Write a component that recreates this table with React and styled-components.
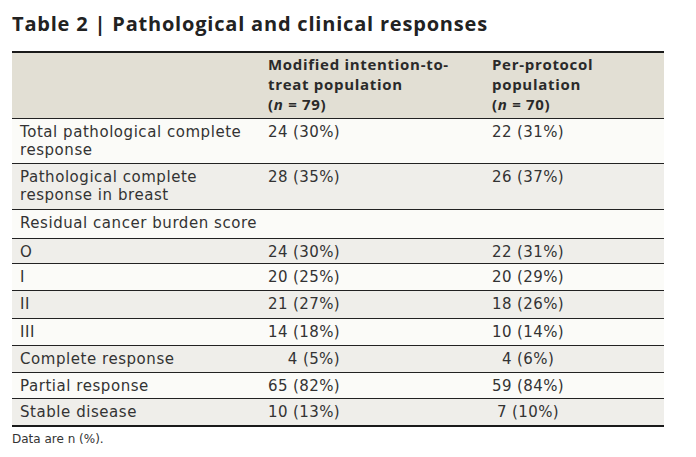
import React from "react";
import styled, { createGlobalStyle } from "styled-components";

const Global = createGlobalStyle`
  html, body { margin: 0; padding: 0; background: #ffffff; }
  body { font-family: "DejaVu Sans", "Liberation Sans", sans-serif; color: #333; }
`;

const Page = styled.div`
  width: 696px;
  height: 457px;
  padding: 11px 32px 0 12px;
  box-sizing: border-box;
  display: flex;
  flex-direction: column;
`;

const Title = styled.h1`
  margin: 0;
  font-family: "Open Sans", "Liberation Sans", sans-serif;
  font-size: 20px;
  line-height: 26px;
  font-weight: 700;
  color: #222;
  letter-spacing: 0.8px;
`;

const Table = styled.div`
  margin-top: 14px;
  border-top: 2px solid #1a1a1a;
  border-bottom: 2px solid #1a1a1a;
  display: grid;
  grid-template-columns: 256px 224px 1fr;
`;

const Row = styled.div`
  display: contents;
  & > div {
    background: ${(p) => (p.$shade === "head" ? "#e2dfd4" : p.$shade === "gray" ? "#efeeea" : "#fbfbf8")};
    border-top: ${(p) => (p.$first ? "none" : "1.5px solid #222")};
    height: ${(p) => p.$h}px;
    box-sizing: border-box;
  }
`;

const Label = styled.div`
  padding: 4px 8px 0 8px;
  font-size: 15px;
  line-height: 18px;
  letter-spacing: 0.55px;
`;

const HeadCell = styled.div`
  padding: 1px 0 0 0;
  font-family: "Open Sans", "Liberation Sans", sans-serif;
  font-size: 15px;
  line-height: 20px;
  font-weight: 700;
  letter-spacing: 0.7px;
  color: #2a2a2a;
`;

const ValA = styled.div`
  padding: 4px 152px 0 0;
  font-size: 15px;
  line-height: 18px;
  letter-spacing: 0.4px;
  text-align: right;
  white-space: nowrap;
`;

const ValB = styled.div`
  padding: 4px 100px 0 0;
  font-size: 15px;
  line-height: 18px;
  letter-spacing: 0.4px;
  text-align: center;
  white-space: nowrap;
`;

const Note = styled.div`
  margin-top: 5px;
  font-size: 12px;
  color: #333;
`;

const Lbl = styled.span`
  display: block;
  max-width: 240px;
`;

const rows = [
  { l: "Total pathological complete response", a: "24 (30%)", b: "22 (31%)", s: "white", h: 45 },
  { l: "Pathological complete response in breast", a: "28 (35%)", b: "26 (37%)", s: "gray", h: 46 },
  { l: "Residual cancer burden score", a: "", b: "", s: "white", h: 29 },
  { l: "O", a: "24 (30%)", b: "22 (31%)", s: "gray", h: 25 },
  { l: "I", a: "20 (25%)", b: "20 (29%)", s: "white", h: 27 },
  { l: "II", a: "21 (27%)", b: "18 (26%)", s: "gray", h: 28 },
  { l: "III", a: "14 (18%)", b: "10 (14%)", s: "white", h: 27 },
  { l: "Complete response", a: "4 (5%)", b: "4 (6%)", s: "gray", h: 27 },
  { l: "Partial response", a: "65 (82%)", b: "59 (84%)", s: "white", h: 26 },
  { l: "Stable disease", a: "10 (13%)", b: "7 (10%)", s: "gray", h: 27 },
];

export default function App() {
  return (
    <Page>
      <Global />
      <Title>Table 2 | Pathological and clinical responses</Title>
      <Table>
        <Row $shade="head" $first $h={65}>
          <div />
          <HeadCell>
            Modified intention-to-
            <br />
            treat population
            <br />(<i>n</i> = 79)
          </HeadCell>
          <HeadCell>
            Per-protocol
            <br />
            population
            <br />(<i>n</i> = 70)
          </HeadCell>
        </Row>
        {rows.map((r, i) => (
          <Row key={i} $shade={r.s} $h={r.h}>
            <Label>
              <Lbl>{r.l}</Lbl>
            </Label>
            <ValA>{r.a}</ValA>
            <ValB>{r.b}</ValB>
          </Row>
        ))}
      </Table>
      <Note>Data are n (%).</Note>
    </Page>
  );
}
